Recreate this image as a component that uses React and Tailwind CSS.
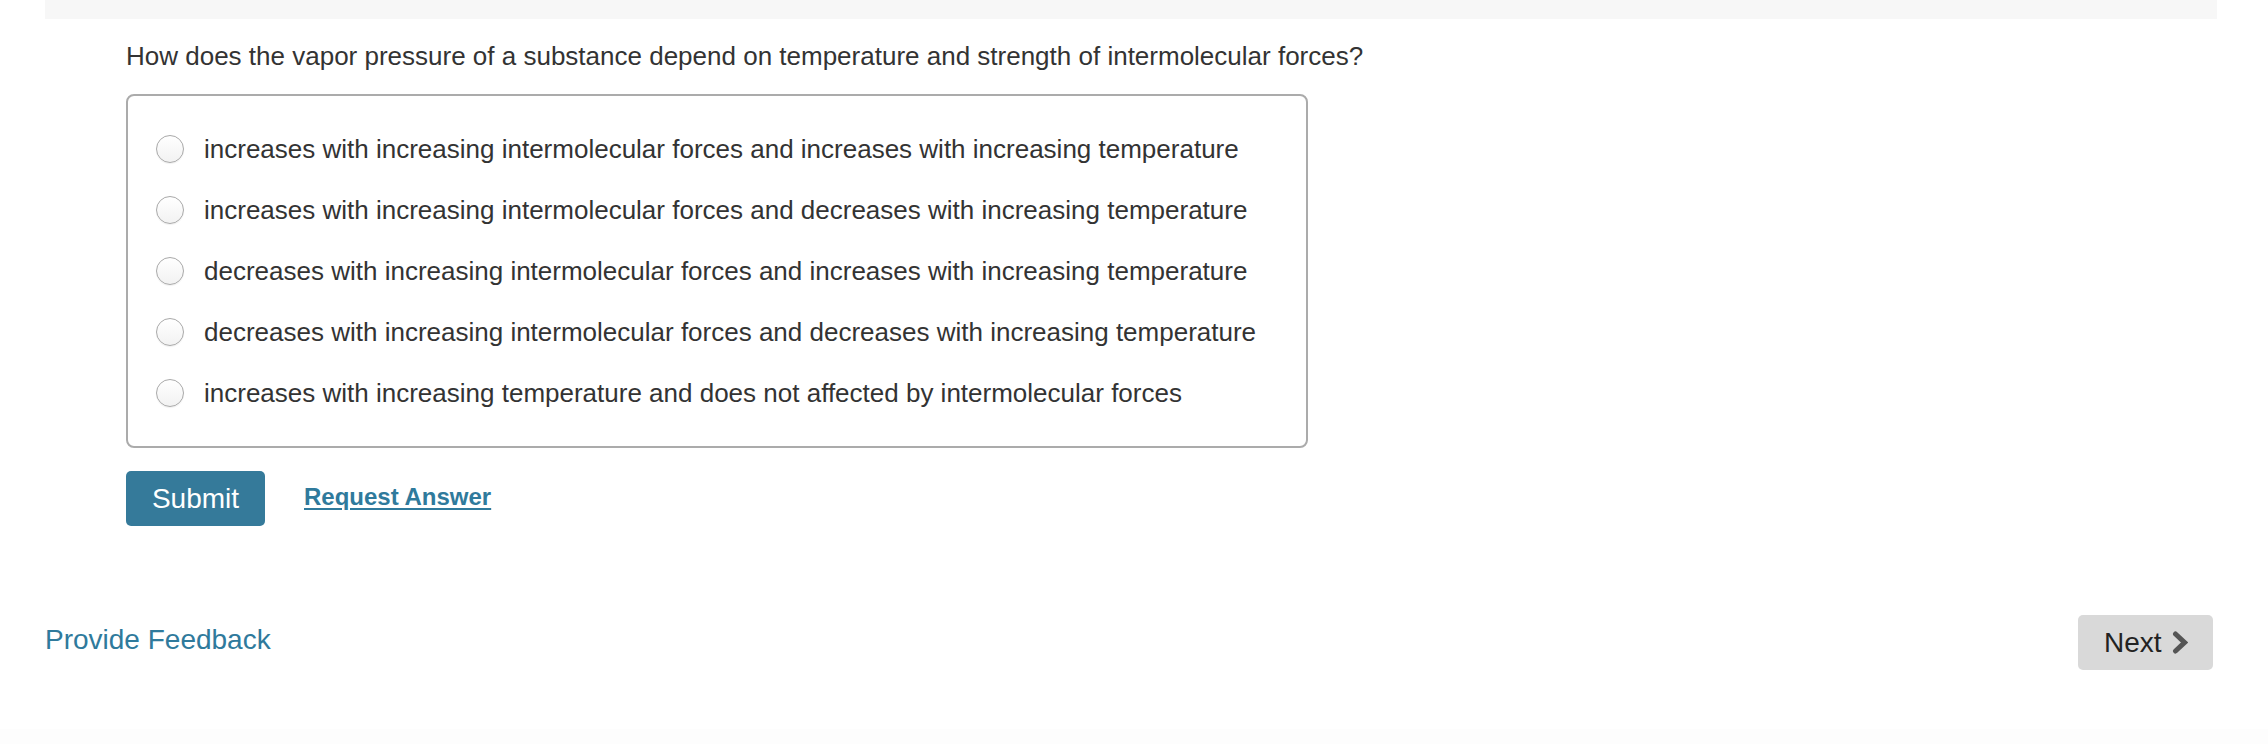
import React from "react";

const options = [
  "increases with increasing intermolecular forces and increases with increasing temperature",
  "increases with increasing intermolecular forces and decreases with increasing temperature",
  "decreases with increasing intermolecular forces and increases with increasing temperature",
  "decreases with increasing intermolecular forces and decreases with increasing temperature",
  "increases with increasing temperature and does not affected by intermolecular forces",
];

function App() {
  return (
    <div className="w-[2268px] h-[744px] bg-white flex flex-col font-['Liberation_Sans',Arial,sans-serif] text-[#333]">
      {/* top strip */}
      <div className="ml-[45px] mr-[51px] h-[19px] bg-[#f7f7f7]"></div>

      {/* question part */}
      <div className="pl-[126px]">
        <p className="mt-[22px] text-[26px] leading-[30px]">
          How does the vapor pressure of a substance depend on temperature and strength of intermolecular forces?
        </p>

        <div className="mt-[23px] w-[1182px] border-2 border-[#ababab] rounded-[8px] pl-[28px] pt-[22px] pb-[23px]">
          {options.map((opt, idx) => {
            return (
              <label key={idx} className="flex items-center h-[61px] gap-[20px] cursor-pointer">
                <span className="w-[28px] h-[28px] rounded-full border-[1.5px] border-[#a9a9a9] bg-linear-to-b from-white to-[#f2f2f2] shadow-[0_1px_1px_rgba(0,0,0,0.06)] shrink-0"></span>
                <span className="text-[26px] leading-[30px]">{opt}</span>
              </label>
            );
          })}
        </div>

        <div className="flex items-center mt-[23px] gap-[39px]">
          <button className="w-[139px] h-[55px] rounded-[5px] bg-[#357a9a] text-white text-[28px]">
            Submit
          </button>
          <a className="text-[24px] font-bold text-[#2f7a9c] underline underline-offset-[3px] -mt-[4px]">
            Request Answer
          </a>
        </div>
      </div>

      {/* footer */}
      <div className="flex justify-between items-center pl-[45px] pr-[55px] mt-[89px]">
        <a className="text-[28px] text-[#2f7a9c] -mt-[6px]">Provide Feedback</a>
        <button className="w-[135px] h-[55px] rounded-[5px] bg-[#d9d9d9] flex items-center pl-[26px] gap-[10px] text-[28px] text-[#222]">
          Next
          <svg width="16" height="23" viewBox="0 0 16 23">
            <path d="M3.5 3 L12.5 11.5 L3.5 20" fill="none" stroke="#555" strokeWidth="5" strokeLinecap="round" strokeLinejoin="miter" />
          </svg>
        </button>
      </div>

      <div className="mt-auto h-[15px] bg-[#fdfdfd]"></div>
    </div>
  );
}

export default App;
